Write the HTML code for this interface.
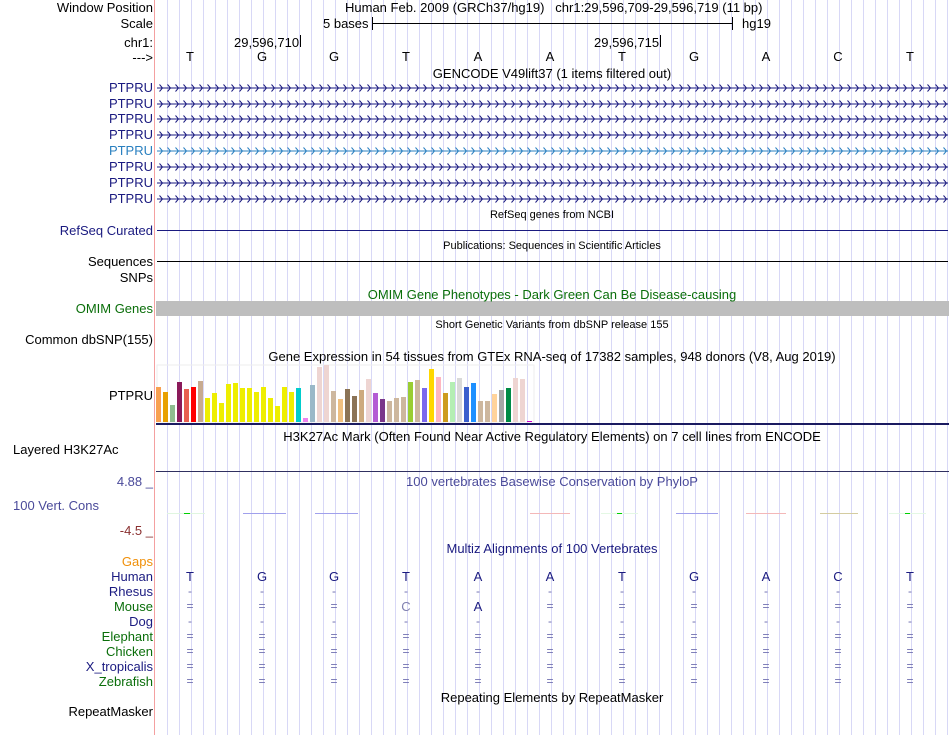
<!DOCTYPE html>
<html><head><meta charset="utf-8"><style>
*{margin:0;padding:0}
body{width:950px;height:735px;background:#fff;position:relative;overflow:hidden;font-family:"Liberation Sans",sans-serif;font-size:13px;color:#000}
.a{position:absolute;white-space:nowrap;line-height:15px}
.l{position:absolute;right:797px;white-space:nowrap;line-height:15px;text-align:right}
.c{position:absolute;white-space:nowrap;line-height:15px;transform:translateX(-50%)}
.s{font-size:11px}
.n{color:#1a1a80}
.g{color:#0a6e0a}
.b{position:absolute;bottom:313px;width:5px}
.h{position:absolute;height:1px}
</style></head><body>
<svg width="950" height="735" style="position:absolute;left:0;top:0">
<defs>
<pattern id="ch" x="157" y="-4" width="8" height="8" patternUnits="userSpaceOnUse"><path d="M2.5 0.5 L5.5 4 L2.5 7.5" stroke="#1a1a80" fill="none" stroke-width="1"/></pattern>
<pattern id="ch2" x="157" y="-4" width="8" height="8" patternUnits="userSpaceOnUse"><path d="M2.5 0.5 L5.5 4 L2.5 7.5" stroke="#2a80c0" fill="none" stroke-width="1"/></pattern>
<pattern id="vl" x="167" y="0" width="12" height="10" patternUnits="userSpaceOnUse"><rect x="0" y="0" width="1" height="10" fill="#d8d8f6"/></pattern>
</defs>
<rect x="167" y="0" width="782" height="735" fill="url(#vl)"/>
<rect x="154" y="0" width="1" height="735" fill="#f4a0a0"/>
<g transform="translate(0,88)"><rect x="157" y="-0.5" width="791" height="1" fill="#1a1a80"/><rect x="157" y="-4" width="791" height="8" fill="url(#ch)"/></g>
<g transform="translate(0,104)"><rect x="157" y="-0.5" width="791" height="1" fill="#1a1a80"/><rect x="157" y="-4" width="791" height="8" fill="url(#ch)"/></g>
<g transform="translate(0,119)"><rect x="157" y="-0.5" width="791" height="1" fill="#1a1a80"/><rect x="157" y="-4" width="791" height="8" fill="url(#ch)"/></g>
<g transform="translate(0,135)"><rect x="157" y="-0.5" width="791" height="1" fill="#1a1a80"/><rect x="157" y="-4" width="791" height="8" fill="url(#ch)"/></g>
<g transform="translate(0,151)"><rect x="157" y="-0.5" width="791" height="1" fill="#2a80c0"/><rect x="157" y="-4" width="791" height="8" fill="url(#ch2)"/></g>
<g transform="translate(0,167)"><rect x="157" y="-0.5" width="791" height="1" fill="#1a1a80"/><rect x="157" y="-4" width="791" height="8" fill="url(#ch)"/></g>
<g transform="translate(0,183)"><rect x="157" y="-0.5" width="791" height="1" fill="#1a1a80"/><rect x="157" y="-4" width="791" height="8" fill="url(#ch)"/></g>
<g transform="translate(0,199)"><rect x="157" y="-0.5" width="791" height="1" fill="#1a1a80"/><rect x="157" y="-4" width="791" height="8" fill="url(#ch)"/></g>
<rect x="157" y="230" width="791" height="1" fill="#1a1a80"/>
<rect x="157" y="261" width="791" height="1" fill="#000"/>
<rect x="156" y="301" width="793" height="15" fill="#bebebe"/>
<rect x="156" y="423" width="793" height="2" fill="#1a1a60"/>
<rect x="156" y="471" width="793" height="1" fill="#303060"/>
<rect x="157" y="365" width="377" height="57" fill="none" stroke="#eee" stroke-width="1"/>
<rect x="372" y="23" width="361" height="1" fill="#000"/>
<rect x="372" y="17" width="1" height="13" fill="#000"/>
<rect x="732" y="17" width="1" height="13" fill="#000"/>
<rect x="300" y="35" width="1" height="12" fill="#000"/>
<rect x="660" y="35" width="1" height="12" fill="#000"/>
</svg>

<div class="l" style="top:0">Window Position</div>
<div class="a" style="left:345px;top:0">Human Feb. 2009 (GRCh37/hg19)&nbsp;&nbsp;&nbsp;chr1:29,596,709-29,596,719 (11 bp)</div>
<div class="l" style="top:16px">Scale</div>
<div class="a" style="left:323px;top:16px">5 bases</div>
<div class="a" style="left:742px;top:16px">hg19</div>
<div class="l" style="top:35px">chr1:</div>
<div class="a" style="left:234px;top:35px">29,596,710</div>
<div class="a" style="left:594px;top:35px">29,596,715</div>
<div class="l" style="top:50px">---&gt;</div>
<div class="c" style="left:190px;top:49px">T</div><div class="c" style="left:262px;top:49px">G</div><div class="c" style="left:334px;top:49px">G</div><div class="c" style="left:406px;top:49px">T</div><div class="c" style="left:478px;top:49px">A</div><div class="c" style="left:550px;top:49px">A</div><div class="c" style="left:622px;top:49px">T</div><div class="c" style="left:694px;top:49px">G</div><div class="c" style="left:766px;top:49px">A</div><div class="c" style="left:838px;top:49px">C</div><div class="c" style="left:910px;top:49px">T</div>
<div class="c" style="left:552px;top:66px">GENCODE V49lift37 (1 items filtered out)</div>
<div class="l n" style="top:80px">PTPRU</div>
<div class="l n" style="top:96px">PTPRU</div>
<div class="l n" style="top:111px">PTPRU</div>
<div class="l n" style="top:127px">PTPRU</div>
<div class="l" style="top:143px;color:#2a80c0">PTPRU</div>
<div class="l n" style="top:159px">PTPRU</div>
<div class="l n" style="top:175px">PTPRU</div>
<div class="l n" style="top:191px">PTPRU</div>
<div class="c s" style="left:552px;top:208px">RefSeq genes from NCBI</div>
<div class="l n" style="top:223px">RefSeq Curated</div>
<div class="c s" style="left:552px;top:239px">Publications: Sequences in Scientific Articles</div>
<div class="l" style="top:254px">Sequences</div>
<div class="l" style="top:270px">SNPs</div>
<div class="c g" style="left:552px;top:287px">OMIM Gene Phenotypes - Dark Green Can Be Disease-causing</div>
<div class="l g" style="top:301px">OMIM Genes</div>
<div class="c s" style="left:552px;top:318px">Short Genetic Variants from dbSNP release 155</div>
<div class="l" style="top:332px">Common dbSNP(155)</div>
<div class="c" style="left:552px;top:349px">Gene Expression in 54 tissues from GTEx RNA-seq of 17382 samples, 948 donors (V8, Aug 2019)</div>
<div class="l" style="top:388px">PTPRU</div>

<div class="b" style="left:156px;height:35px;background:#f8a050"></div>
<div class="b" style="left:163px;height:30px;background:#e8a000"></div>
<div class="b" style="left:170px;height:17px;background:#8fbc8f"></div>
<div class="b" style="left:177px;height:40px;background:#8b1a5a"></div>
<div class="b" style="left:184px;height:33px;background:#e86050"></div>
<div class="b" style="left:191px;height:35px;background:#ff0000"></div>
<div class="b" style="left:198px;height:41px;background:#c8ab90"></div>
<div class="b" style="left:205px;height:24px;background:#eeee00"></div>
<div class="b" style="left:212px;height:29px;background:#eeee00"></div>
<div class="b" style="left:219px;height:19px;background:#eeee00"></div>
<div class="b" style="left:226px;height:38px;background:#eeee00"></div>
<div class="b" style="left:233px;height:39px;background:#eeee00"></div>
<div class="b" style="left:240px;height:34px;background:#eeee00"></div>
<div class="b" style="left:247px;height:34px;background:#eeee00"></div>
<div class="b" style="left:254px;height:30px;background:#eeee00"></div>
<div class="b" style="left:261px;height:35px;background:#eeee00"></div>
<div class="b" style="left:268px;height:24px;background:#eeee00"></div>
<div class="b" style="left:275px;height:16px;background:#eeee00"></div>
<div class="b" style="left:282px;height:35px;background:#eeee00"></div>
<div class="b" style="left:289px;height:30px;background:#eeee00"></div>
<div class="b" style="left:296px;height:34px;background:#00cdcd"></div>
<div class="b" style="left:303px;height:4px;background:#ee82ee"></div>
<div class="b" style="left:310px;height:37px;background:#9ab8c8"></div>
<div class="b" style="left:317px;height:55px;background:#eed5d2"></div>
<div class="b" style="left:324px;height:57px;background:#eed5d2"></div>
<div class="b" style="left:331px;height:31px;background:#cdb79e"></div>
<div class="b" style="left:338px;height:23px;background:#f0c080"></div>
<div class="b" style="left:345px;height:33px;background:#8b7355"></div>
<div class="b" style="left:352px;height:26px;background:#8b7355"></div>
<div class="b" style="left:359px;height:32px;background:#cdaa7d"></div>
<div class="b" style="left:366px;height:43px;background:#eed5d2"></div>
<div class="b" style="left:373px;height:29px;background:#b45cd4"></div>
<div class="b" style="left:380px;height:23px;background:#7a378b"></div>
<div class="b" style="left:387px;height:21px;background:#cdb79e"></div>
<div class="b" style="left:394px;height:24px;background:#cdb79e"></div>
<div class="b" style="left:401px;height:25px;background:#cdb79e"></div>
<div class="b" style="left:408px;height:40px;background:#9acd32"></div>
<div class="b" style="left:415px;height:42px;background:#cdb79e"></div>
<div class="b" style="left:422px;height:34px;background:#7b68ee"></div>
<div class="b" style="left:429px;height:53px;background:#ffd700"></div>
<div class="b" style="left:436px;height:45px;background:#ffb6c1"></div>
<div class="b" style="left:443px;height:29px;background:#cd9b1d"></div>
<div class="b" style="left:450px;height:40px;background:#b4eeb4"></div>
<div class="b" style="left:457px;height:44px;background:#d9d9d9"></div>
<div class="b" style="left:464px;height:35px;background:#3a5fcd"></div>
<div class="b" style="left:471px;height:39px;background:#1e90ff"></div>
<div class="b" style="left:478px;height:21px;background:#cdb79e"></div>
<div class="b" style="left:485px;height:21px;background:#cdb79e"></div>
<div class="b" style="left:492px;height:28px;background:#ffd39b"></div>
<div class="b" style="left:499px;height:32px;background:#a6a6a6"></div>
<div class="b" style="left:506px;height:34px;background:#008b45"></div>
<div class="b" style="left:513px;height:44px;background:#eed5d2"></div>
<div class="b" style="left:520px;height:43px;background:#eed5d2"></div>
<div class="b" style="left:527px;height:1px;background:#cd00cd"></div>

<div class="c" style="left:552px;top:429px">H3K27Ac Mark (Often Found Near Active Regulatory Elements) on 7 cell lines from ENCODE</div>
<div class="a" style="left:13px;top:442px">Layered H3K27Ac</div>
<div class="l" style="top:474px;color:#4a4a9a">4.88 _</div>
<div class="c" style="left:552px;top:474px;color:#4a4a9a">100 vertebrates Basewise Conservation by PhyloP</div>
<div class="a" style="left:13px;top:498px;color:#4a4a9a">100 Vert. Cons</div>
<div class="l" style="top:523px;color:#8a3030">-4.5 _</div>
<div class="h" style="left:167px;top:513px;width:38px;background:#e0f6e0"></div><div class="h" style="left:184px;top:513px;width:6px;background:#00d000"></div>
<div class="h" style="left:243px;top:513px;width:43px;background:#a0a0ec"></div>
<div class="h" style="left:315px;top:513px;width:43px;background:#a0a0ec"></div>
<div class="h" style="left:530px;top:513px;width:40px;background:#f4b8b8"></div>
<div class="h" style="left:601px;top:513px;width:37px;background:#e4f8e4"></div><div class="h" style="left:617px;top:513px;width:5px;background:#00d000"></div>
<div class="h" style="left:676px;top:513px;width:42px;background:#a0a0ec"></div>
<div class="h" style="left:746px;top:513px;width:40px;background:#f4b8b8"></div>
<div class="h" style="left:820px;top:513px;width:38px;background:#d4cca0"></div>
<div class="h" style="left:889px;top:513px;width:37px;background:#e4f8e4"></div><div class="h" style="left:905px;top:513px;width:5px;background:#00d000"></div>

<div class="c n" style="left:552px;top:541px">Multiz Alignments of 100 Vertebrates</div>
<div class="l" style="top:554px;color:#f0900a">Gaps</div>
<div class="l n" style="top:569px">Human</div>
<div class="l n" style="top:584px">Rhesus</div>
<div class="l g" style="top:599px">Mouse</div>
<div class="l n" style="top:614px">Dog</div>
<div class="l g" style="top:629px">Elephant</div>
<div class="l g" style="top:644px">Chicken</div>
<div class="l n" style="top:659px">X_tropicalis</div>
<div class="l g" style="top:674px">Zebrafish</div>

<div class="c n" style="left:190px;top:569px">T</div><div class="c n" style="left:262px;top:569px">G</div><div class="c n" style="left:334px;top:569px">G</div><div class="c n" style="left:406px;top:569px">T</div><div class="c n" style="left:478px;top:569px">A</div><div class="c n" style="left:550px;top:569px">A</div><div class="c n" style="left:622px;top:569px">T</div><div class="c n" style="left:694px;top:569px">G</div><div class="c n" style="left:766px;top:569px">A</div><div class="c n" style="left:838px;top:569px">C</div><div class="c n" style="left:910px;top:569px">T</div>
<div style="position:absolute;left:0;top:0;color:#7070b0;font-size:12px">
<div class="c" style="left:190px;top:584px">-</div><div class="c" style="left:262px;top:584px">-</div><div class="c" style="left:334px;top:584px">-</div><div class="c" style="left:406px;top:584px">-</div><div class="c" style="left:478px;top:584px">-</div><div class="c" style="left:550px;top:584px">-</div><div class="c" style="left:622px;top:584px">-</div><div class="c" style="left:694px;top:584px">-</div><div class="c" style="left:766px;top:584px">-</div><div class="c" style="left:838px;top:584px">-</div><div class="c" style="left:910px;top:584px">-</div>
<div class="c" style="left:190px;top:599px">=</div><div class="c" style="left:262px;top:599px">=</div><div class="c" style="left:334px;top:599px">=</div><div class="c" style="left:406px;top:599px;font-size:13px;color:#8080b0">C</div><div class="c" style="left:478px;top:599px;font-size:13px;color:#1a1a80">A</div><div class="c" style="left:550px;top:599px">=</div><div class="c" style="left:622px;top:599px">=</div><div class="c" style="left:694px;top:599px">=</div><div class="c" style="left:766px;top:599px">=</div><div class="c" style="left:838px;top:599px">=</div><div class="c" style="left:910px;top:599px">=</div>
<div class="c" style="left:190px;top:614px">-</div><div class="c" style="left:262px;top:614px">-</div><div class="c" style="left:334px;top:614px">-</div><div class="c" style="left:406px;top:614px">-</div><div class="c" style="left:478px;top:614px">-</div><div class="c" style="left:550px;top:614px">-</div><div class="c" style="left:622px;top:614px">-</div><div class="c" style="left:694px;top:614px">-</div><div class="c" style="left:766px;top:614px">-</div><div class="c" style="left:838px;top:614px">-</div><div class="c" style="left:910px;top:614px">-</div>
<div class="c" style="left:190px;top:629px">=</div><div class="c" style="left:262px;top:629px">=</div><div class="c" style="left:334px;top:629px">=</div><div class="c" style="left:406px;top:629px">=</div><div class="c" style="left:478px;top:629px">=</div><div class="c" style="left:550px;top:629px">=</div><div class="c" style="left:622px;top:629px">=</div><div class="c" style="left:694px;top:629px">=</div><div class="c" style="left:766px;top:629px">=</div><div class="c" style="left:838px;top:629px">=</div><div class="c" style="left:910px;top:629px">=</div>
<div class="c" style="left:190px;top:644px">=</div><div class="c" style="left:262px;top:644px">=</div><div class="c" style="left:334px;top:644px">=</div><div class="c" style="left:406px;top:644px">=</div><div class="c" style="left:478px;top:644px">=</div><div class="c" style="left:550px;top:644px">=</div><div class="c" style="left:622px;top:644px">=</div><div class="c" style="left:694px;top:644px">=</div><div class="c" style="left:766px;top:644px">=</div><div class="c" style="left:838px;top:644px">=</div><div class="c" style="left:910px;top:644px">=</div>
<div class="c" style="left:190px;top:659px">=</div><div class="c" style="left:262px;top:659px">=</div><div class="c" style="left:334px;top:659px">=</div><div class="c" style="left:406px;top:659px">=</div><div class="c" style="left:478px;top:659px">=</div><div class="c" style="left:550px;top:659px">=</div><div class="c" style="left:622px;top:659px">=</div><div class="c" style="left:694px;top:659px">=</div><div class="c" style="left:766px;top:659px">=</div><div class="c" style="left:838px;top:659px">=</div><div class="c" style="left:910px;top:659px">=</div>
<div class="c" style="left:190px;top:674px">=</div><div class="c" style="left:262px;top:674px">=</div><div class="c" style="left:334px;top:674px">=</div><div class="c" style="left:406px;top:674px">=</div><div class="c" style="left:478px;top:674px">=</div><div class="c" style="left:550px;top:674px">=</div><div class="c" style="left:622px;top:674px">=</div><div class="c" style="left:694px;top:674px">=</div><div class="c" style="left:766px;top:674px">=</div><div class="c" style="left:838px;top:674px">=</div><div class="c" style="left:910px;top:674px">=</div>
</div>
<div class="c" style="left:552px;top:690px">Repeating Elements by RepeatMasker</div>
<div class="l" style="top:704px">RepeatMasker</div>
</body></html>
